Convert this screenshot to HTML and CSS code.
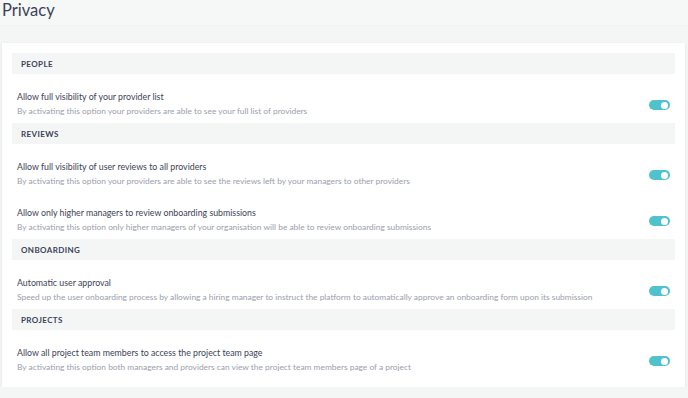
FILE: index.html
```html
<!DOCTYPE html>
<html lang="en">
<head>
  <meta charset="UTF-8">
  <title>Privacy</title>
  <link rel="stylesheet" href="styles.css">
</head>
<body>
  <div class="page-header">
    <h1>Privacy</h1>
  </div>

  <div class="card">
    <div class="section-title">People</div>
    <div class="section-rows">
      <div class="setting">
        <div class="setting-text">
          <div class="setting-name">Allow full visibility of your provider list</div>
          <div class="setting-desc">By activating this option your providers are able to see your full list of providers</div>
        </div>
        <label class="toggle"><input type="checkbox" checked><span class="slider"></span></label>
      </div>
    </div>

    <div class="section-title">Reviews</div>
    <div class="section-rows">
      <div class="setting">
        <div class="setting-text">
          <div class="setting-name">Allow full visibility of user reviews to all providers</div>
          <div class="setting-desc">By activating this option your providers are able to see the reviews left by your managers to other providers</div>
        </div>
        <label class="toggle"><input type="checkbox" checked><span class="slider"></span></label>
      </div>
      <div class="setting">
        <div class="setting-text">
          <div class="setting-name">Allow only higher managers to review onboarding submissions</div>
          <div class="setting-desc">By activating this option only higher managers of your organisation will be able to review onboarding submissions</div>
        </div>
        <label class="toggle"><input type="checkbox" checked><span class="slider"></span></label>
      </div>
    </div>

    <div class="section-title">Onboarding</div>
    <div class="section-rows">
      <div class="setting">
        <div class="setting-text">
          <div class="setting-name">Automatic user approval</div>
          <div class="setting-desc">Speed up the user onboarding process by allowing a hiring manager to instruct the platform to automatically approve an onboarding form upon its submission</div>
        </div>
        <label class="toggle"><input type="checkbox" checked><span class="slider"></span></label>
      </div>
    </div>

    <div class="section-title">Projects</div>
    <div class="section-rows">
      <div class="setting">
        <div class="setting-text">
          <div class="setting-name">Allow all project team members to access the project team page</div>
          <div class="setting-desc">By activating this option both managers and providers can view the project team members page of a project</div>
        </div>
        <label class="toggle"><input type="checkbox" checked><span class="slider"></span></label>
      </div>
    </div>
  </div>
</body>
</html>
```

FILE: styles.css
```css
* {
  box-sizing: border-box;
}

body {
  margin: 0;
  background: #f4f5f5;
  font-family: 'Lato', sans-serif;
  color: #3b4256;
}

.page-header {
  height: 26px;
  padding: 0 2px;
  background: #f6f7f7;
  border-bottom: 1px solid #f0f1f1;
  margin-bottom: 17px;
}

.page-header h1 {
  margin: 0;
  font-size: 16.5px;
  font-weight: 400;
  line-height: 20px;
  color: #3b4256;
}

.card {
  margin: 0 3px 0 2px;
  padding: 10px 10px 8px;
  background: #fff;
  box-shadow: 0 1px 3px rgba(0, 0, 0, 0.08);
}

.section-title {
  height: 21px;
  padding-left: 9px;
  display: flex;
  align-items: center;
  background: #f4f6f6;
  font-size: 8px;
  font-weight: 700;
  letter-spacing: 0.4px;
  text-transform: uppercase;
  color: #3b4256;
}

.section-rows {
  padding-top: 3px;
}

.setting {
  height: 46px;
  padding: 12px 5px 0 5px;
  display: flex;
  align-items: flex-start;
  justify-content: space-between;
}

.setting-name {
  font-size: 8.8px;
  line-height: 15px;
  color: #3b4256;
}

.setting-desc {
  font-size: 8.4px;
  line-height: 15px;
  color: #9a9eac;
}

.toggle {
  position: relative;
  width: 21px;
  height: 10px;
  margin-top: 11px;
}

.toggle input {
  display: none;
}

.slider {
  position: absolute;
  inset: 0;
  border-radius: 5px;
  background: #4fc2cd;
}

.slider::after {
  content: "";
  position: absolute;
  top: 1.5px;
  right: 2px;
  width: 7px;
  height: 7px;
  border-radius: 50%;
  background: #fff;
}
```
